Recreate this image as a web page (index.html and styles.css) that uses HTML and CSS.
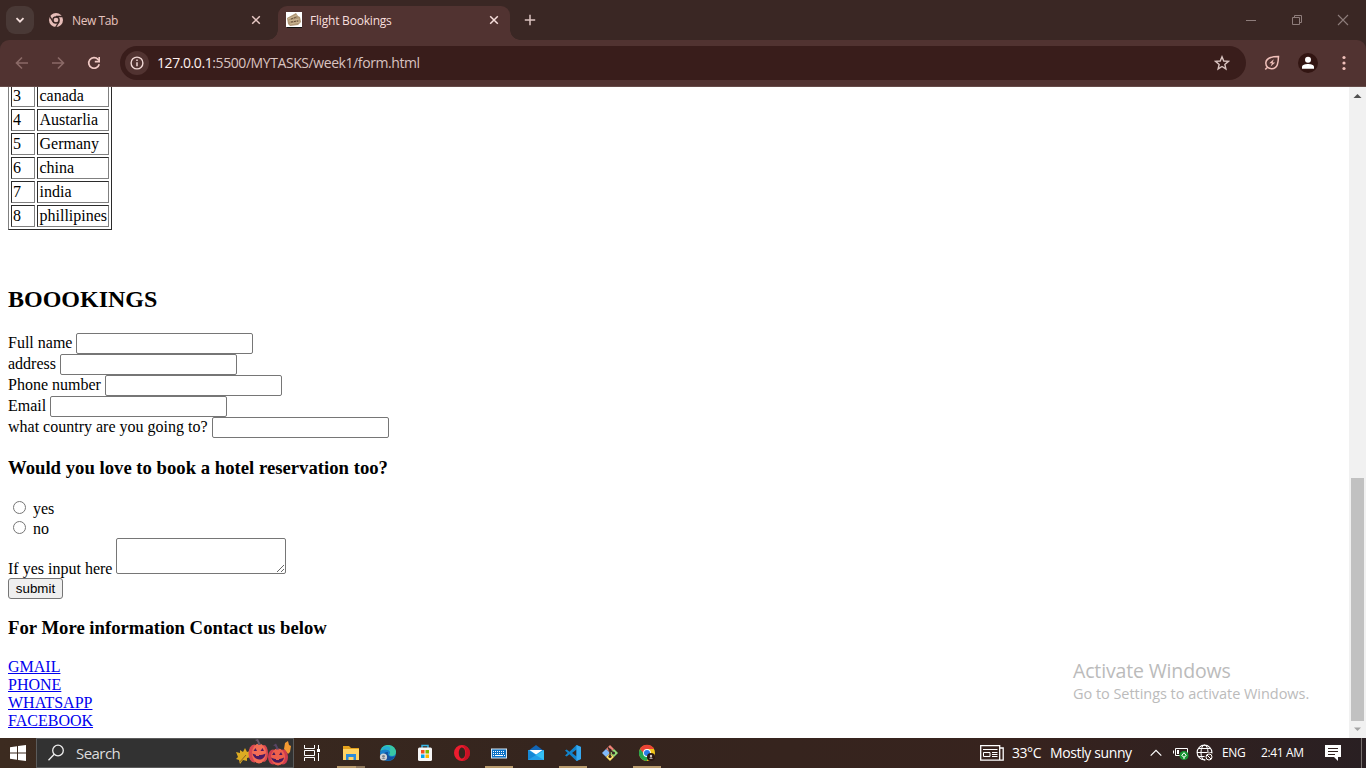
FILE: index.html
```html
<!DOCTYPE html>
<html lang="en">
<head>
<meta charset="utf-8">
<title>Flight Bookings</title>
<link rel="stylesheet" href="styles.css">
</head>
<body>
<div class="screen">
  <header class="tabstrip">
    <div class="tabsearch"><svg width="10" height="10" viewBox="0 0 10 10"><path d="M1.500 3.200 5 6.700 8.500 3.200" fill="none" stroke="#f3dedb" stroke-width="1.800"/></svg></div>
    <div class="tab">
      <svg width="16" height="16" viewBox="0 0 16 16"><circle cx="8" cy="8" r="7" fill="#e7bdb8"/><circle cx="8" cy="8" r="3.100" fill="#e7bdb8" stroke="#3a2724" stroke-width="1.500"/><path d="M8 4.500H15M5 9.700 1.500 3.800M11 9.800 7.500 15.500" stroke="#3a2724" stroke-width="1.300"/></svg>
      <span class="tabname t-new">New Tab</span>
      <svg class="close" width="10" height="10" viewBox="0 0 10 10"><path d="m1.200 1.200 7.600 7.600m0-7.600L1.200 8.800" stroke="#e7c8c4" stroke-width="1.500"/></svg>
    </div>
    <div class="tab active">
      <svg width="16" height="16" viewBox="0 0 16 16"><path fill="#fff" d="M0 0h16v15H0z"/><path fill="#111" d="M1 15h15v1H1z"/><path fill="#b09776" d="m1 6 9-5 2 3 2 1 1 5-3 3-8 1-2-2z"/><path d="m2 7 9-4M3 9l10-2M4 12l10-2" stroke="#d9c6a2" stroke-width=".7"/><path d="m5 7 6-2M5 10l7-1" stroke="#67523c" stroke-dasharray="2 1"/></svg>
      <span class="tabname t-flight">Flight Bookings</span>
      <svg class="close" width="10" height="10" viewBox="0 0 10 10"><path d="m1.200 1.200 7.600 7.600m0-7.600L1.200 8.800" stroke="#f7dfdc" stroke-width="1.500"/></svg>
    </div>
    <svg class="plus" width="12" height="12" viewBox="0 0 12 12"><path d="M6 .8v10.400M.8 6h10.400" stroke="#dbc3c0" stroke-width="1.500"/></svg>
    <div class="winbtns">
      <svg width="12" height="12" viewBox="0 0 12 12"><path d="M1 6.500h10" stroke="#8e7d7b"/></svg>
      <svg width="12" height="12" viewBox="0 0 12 12"><path d="M1.500 3.500h7v7h-7zM3.500 3.500v-2h7v7h-2" fill="none" stroke="#8e7d7b"/></svg>
      <svg width="12" height="12" viewBox="0 0 12 12"><path d="m1 1 10 10M11 1 1 11" stroke="#8e7d7b" stroke-width="1.100"/></svg>
    </div>
  </header>
  <div class="toolbarwrap"><nav class="toolbar">
    <svg class="back" width="14" height="14" viewBox="0 0 14 14"><path d="M13 7H2M7 1.500 1.500 7 7 12.500" fill="none" stroke="#8b6a67" stroke-width="1.600"/></svg>
    <svg class="fwd" width="14" height="14" viewBox="0 0 14 14"><path d="M1 7h11M7 1.500 12.500 7 7 12.500" fill="none" stroke="#8b6a67" stroke-width="1.600"/></svg>
    <svg class="reload" width="14" height="14" viewBox="0 0 14 14"><path d="M12.200 8.200A5.300 5.300 0 1 1 11 3.400l1 1" fill="none" stroke="#f0c9c4" stroke-width="1.700"/><path d="M12.200 1v4.600H7.800" fill="none" stroke="#f0c9c4" stroke-width="1.600"/></svg>
    <div class="omnibox">
      <div class="info"><svg width="14" height="14" viewBox="0 0 14 14"><circle cx="7" cy="7" r="5.900" fill="none" stroke="#f0d8d5" stroke-width="1.400"/><path d="M7 6.300v4M7 3.500V5" stroke="#f0d8d5" stroke-width="1.500"/></svg></div>
      <span class="url"><b>127.0.0.1</b>:5500/MYTASKS/week1/form.html</span>
      <svg class="star" width="16" height="16" viewBox="0 0 16 16"><path d="m8 1.800 1.750 4.200 4.600.4-3.500 3 1.050 4.500L8 11.500l-3.900 2.400 1.050-4.500-3.500-3 4.600-.4z" fill="none" stroke="#d9c3c0" stroke-width="1.400"/></svg>
    </div>
    <svg class="leaf" width="16" height="16" viewBox="0 0 16 16"><path d="M14.500 1.500C9 1.500 2 2 1.800 8c0 4 3 5.800 6 5.700 6-.2 6.500-6.500 6.700-12.200zM3.500 12 1.300 14.500" fill="none" stroke="#f0c0ba" stroke-width="1.500"/><path d="m9.800 4.200-4.500 4h2.600L6.600 11.600l4.600-4.200H8.600z" fill="#f0c0ba"/></svg>
    <div class="avatar"><svg width="14" height="14" viewBox="0 0 14 14"><circle cx="7" cy="3.700" r="3" fill="#fff"/><path d="M1 12.800v-2C1 8.700 4.500 7.900 7 7.900s6 .8 6 2.900v2z" fill="#fff"/></svg></div>
    <svg class="dots" width="4" height="16" viewBox="0 0 4 16" fill="#f0c0ba"><circle cx="2" cy="2.500" r="1.600"/><circle cx="2" cy="8" r="1.600"/><circle cx="2" cy="13.500" r="1.600"/></svg>
  </nav></div>
  <div class="viewport">
    <main class="page">
      <table class="countries">
        <tr><td class="num">3</td><td class="name">canada</td></tr>
        <tr><td class="num">4</td><td class="name">Austarlia</td></tr>
        <tr><td class="num">5</td><td class="name">Germany</td></tr>
        <tr><td class="num">6</td><td class="name">china</td></tr>
        <tr><td class="num">7</td><td class="name">india</td></tr>
        <tr><td class="num">8</td><td class="name">phillipines</td></tr>
      </table>
      <h2 class="title">BOOOKINGS</h2>
      <form>
        <div class="row"><label>Full name</label><input class="field" type="text"></div>
        <div class="row"><label>address</label><input class="field" type="text"></div>
        <div class="row"><label>Phone number</label><input class="field" type="text"></div>
        <div class="row"><label>Email</label><input class="field" type="text"></div>
        <div class="row"><label>what country are you going to?</label><input class="field" type="text"></div>
        <h3 class="hotel">Would you love to book a hotel reservation too?</h3>
        <div class="choice"><input class="radio" type="radio" name="hotel"><label>yes</label></div>
        <div class="choice"><input class="radio" type="radio" name="hotel"><label>no</label></div>
        <div class="arearow"><label>If yes input here</label><textarea class="area"></textarea></div>
        <button class="submit" type="button">submit</button>
      </form>
      <h3 class="contact">For More information Contact us below</h3>
      <div class="links"><a href="#">GMAIL</a><a href="#">PHONE</a><a href="#">WHATSAPP</a><a href="#">FACEBOOK</a></div>
    </main>
    <div class="scrollbar">
      <svg width="17" height="17" viewBox="0 0 17 17"><path d="m4.500 11 4-4 4 4z" fill="#505050"/></svg>
      <div class="thumb"></div>
      <svg width="17" height="17" viewBox="0 0 17 17"><path d="m5 6.500 3.500 3.500L12 6.500z" fill="#a3a3a3"/></svg>
    </div>
    <div class="activate"><div class="act1">Activate Windows</div><div class="act2">Go to Settings to activate Windows.</div></div>
  </div>
  <footer class="taskbar">
    <div class="start"><svg width="16" height="16" viewBox="0 0 16 16"><path fill="#fff" d="M0 2.200 7 1.200v6.300H0zM8 1.100 16 0v7.500H8zM0 8.500h7v6.300l-7-1zM8 8.500h8V16l-8-1.100z"/></svg></div>
    <div class="search">
      <svg width="18" height="18" viewBox="0 0 18 18"><circle cx="11" cy="6.500" r="5.300" fill="none" stroke="#eee" stroke-width="1.300"/><path d="m7.200 10.200-5.700 6" stroke="#eee" stroke-width="1.300"/></svg>
      <span class="searchtext">Search</span>
      <svg class="pumpkins" width="56" height="28" viewBox="0 0 56 28">
        <path d="M0 13l4 1 0-3 3 2 2-4 2 4 3-1-1 4 2 2-4 1 0 3-4-1-3 4-1-4-3-1 2-2z" fill="#dcab22"/><path d="m3 24 7-8" stroke="#87632a"/>
        <path d="m49 4 3-2 1 4 2 1-1 6-2 2-4-5z" fill="#f39a32"/>
        <ellipse cx="18" cy="14.500" rx="5.500" ry="9" fill="#d94851"/><ellipse cx="28" cy="14.500" rx="4" ry="8.500" fill="#d94851"/><ellipse cx="23" cy="14.500" rx="7" ry="10" fill="#f46d55"/><path d="M22 6c0-3-1-4-3-5l3-1 3 6z" fill="#69586a"/><path d="m17.500 12 2-3 1.500 3zm7 0 2-3 1.500 3zM16.500 14.500c4 2 9 2 13 0-1 8-11 8-13 0z" fill="#4d1b62"/><path d="M20 15h3v2h-3z" fill="#f46d55"/>
        <ellipse cx="37" cy="18" rx="5" ry="7.500" fill="#cf3c4f"/><ellipse cx="47" cy="18" rx="5" ry="7.500" fill="#cf3c4f"/><ellipse cx="42" cy="18" rx="7" ry="8.500" fill="#ef604c"/><path d="M40 10.500c0-3-1-4-3-4l3-2 3 6z" fill="#574565"/><path d="m36 16 2-3 1.500 3zm7 0 2-3 1.500 3zM35 18.500c4 2 9 2 13 0-1 7-11 7-13 0z" fill="#471a5c"/><path d="M40 19h3v2h-3z" fill="#ef604c"/>
      </svg>
    </div>
    <div class="app view"><svg width="18" height="18" viewBox="0 0 18 18"><path d="M1.500 1v3.500h10V1M1.500 17v-3.500h10V17M1.500 6.500h10v5h-10zM15.500 1v5M15.500 9v8" fill="none" stroke="#fff"/><path d="M14 5h3v3h-3z" fill="#fff"/></svg></div>
    <div class="app open first"><svg width="18" height="18" viewBox="0 0 18 18"><path d="M1 2h6l2 2h8v11H1z" fill="#e5a21c"/><path d="M1 5h16v11H1z" fill="#ffd464"/><path d="M4 10h10v6h-2.500v-3h-5v3H4z" fill="#2a8bd8"/></svg></div>
    <div class="app"><svg width="18" height="18" viewBox="0 0 18 18"><circle cx="9" cy="9" r="8" fill="#1680cc"/><path d="M1.500 7C3-1 15-1 17 7c.5 5-4 6-7 4 4-5-4-7-8.500-4z" fill="#38c7a4"/><path d="M2 6c4-6 11-4 9 1-2-2-6-3-9-1z" fill="#24acd9"/><path d="M9 8c-1 4 3 6 7 4-3 6-11 6-12 0 0-3 2-4 5-4z" fill="#12519d"/><circle cx="4.500" cy="13" r="3.600" fill="#ced2d6"/><circle cx="4.500" cy="12.300" r="1.400" fill="#7b8289"/><path d="M2.500 15c1-1.500 3-1.500 4 0" fill="#7b8289"/></svg></div>
    <div class="app"><svg width="18" height="18" viewBox="0 0 18 18"><path d="M6 4V1.500h6V4" fill="none" stroke="#37b7e7" stroke-width="1.500"/><rect x="2" y="3.500" width="14" height="13.500" rx="1.500" fill="#f6f6f6"/><path d="M5 6h3.500v3.500H5z" fill="#f25022"/><path d="M9.500 6H13v3.500H9.500z" fill="#7fba00"/><path d="M5 10.500h3.500V14H5z" fill="#00a4ef"/><path d="M9.500 10.500H13V14H9.500z" fill="#ffb900"/></svg></div>
    <div class="app"><svg width="18" height="18" viewBox="0 0 18 18"><path fill-rule="evenodd" d="M9 1a8 8 0 1 0 0 16A8 8 0 0 0 9 1zm0 2.500c2 0 3.200 2.400 3.200 5.500S11 14.500 9 14.500 5.800 12 5.800 9 7 3.500 9 3.500z" fill="#ec1c2e"/><path d="M9 1.500c5 0 8 3 8 7.500s-3 7.500-8 7.500c5-1 5-14 0-15z" fill="#b70d1e" opacity=".65"/></svg></div>
    <div class="app open"><svg width="18" height="18" viewBox="0 0 18 18"><rect x="1" y="4.500" width="16" height="10" fill="#d6e8f5"/><rect x="2" y="5.500" width="14" height="8" fill="#0b71c5"/><path d="M3 7.500h12M3 9.500h12" stroke="#fff" stroke-dasharray="1 1"/><path d="M3 11.500h1M5 11.500h8M14 11.500h1" stroke="#fff"/></svg></div>
    <div class="app"><svg width="18" height="18" viewBox="0 0 18 18"><path d="m1 7 8-6 8 6z" fill="#1265b5"/><path d="M1 6h16v10H1z" fill="#239fe8"/><path d="M2.500 6h13L9 10.500z" fill="#fff"/><path d="M1 6.500 9 11l8-4.500V16z" fill="#34c0f5"/><path d="m1 6 8 5-8 5z" fill="#1688d5"/></svg></div>
    <div class="app open"><svg width="18" height="18" viewBox="0 0 18 18"><path d="m12.500 1 4.500 2v12l-4.500 2L5.500 10.300 2.700 12.500 1 11.500 3.700 9 1 6.500l1.700-1 2.800 2.200zM12.500 5.500 8 9l4.500 3.500z" fill="#1284cc" fill-rule="evenodd"/><path d="m12.500 1 4.500 2v12l-4.500 2z" fill="#36a9f0"/></svg></div>
    <div class="app"><svg width="18" height="18" viewBox="0 0 18 18"><path d="m9 1 4 4-4 4-4-4z" fill="#f08377"/><path d="m5 5 4 4-4 4-4-4z" fill="#80b9fa"/><path d="m13 5 4 4-4 4-4-4z" fill="#92dd77"/><path d="m9 9 4 4-4 4-4-4z" fill="#ffe36c"/><path d="M7 3.500 9 6v7M9 6l3.500 3" fill="none" stroke="#392722" stroke-width="1.300"/><circle cx="9" cy="6" r="1.600" fill="#392722"/><circle cx="12.500" cy="9" r="1.600" fill="#392722"/><circle cx="9" cy="12.500" r="1.600" fill="#392722"/></svg></div>
    <div class="app open"><svg width="18" height="18" viewBox="0 0 18 18"><circle cx="9" cy="9" r="8" fill="#f3c51b"/><path d="M2 5a8 8 0 0 1 14 0H9L6 11z" fill="#ea4335"/><path d="M2 5a8 8 0 0 0 6.500 12l3.500-6-6-1z" fill="#25a650"/><circle cx="9" cy="9" r="3.900" fill="#fff"/><circle cx="9" cy="9" r="3" fill="#287de8"/><circle cx="13" cy="13" r="4" fill="#2b1714"/><circle cx="13" cy="12" r="1.200" fill="#cfc5c3"/><path d="M11.200 14.700c.7-1.500 2.900-1.500 3.600 0z" fill="#cfc5c3"/></svg></div>
    <div class="tray">
      <svg class="news" width="24" height="16" viewBox="0 0 24 16"><path d="M.7.700h19v14.500h-19zM19.700 3h3.500v12.200H19" fill="none" stroke="#fff" stroke-width="1.300"/><path d="M3 4.500h14.500M12 7.500h5.500M12 9.500h5.500M12 11.500h5.500M3.500 7.500H10v4H3.500z" fill="none" stroke="#fff"/></svg>
      <span class="temp">33°C</span><span class="sunny">Mostly sunny</span>
      <svg class="caret" width="12" height="8" viewBox="0 0 12 8"><path d="m.7 6.700 5.300-5.300 5.300 5.300" fill="none" stroke="#fff" stroke-width="1.200"/></svg>
      <svg class="battery" width="16" height="14" viewBox="0 0 16 14"><path d="M2.500 2.500h12v7h-12zM.5 4.500v3" fill="none" stroke="#fff"/><path d="M4 4h2v4H4z" fill="#fff"/><circle cx="11" cy="9.500" r="4.500" fill="#159431"/><path d="M11 6.700 8.700 9.500 11 11.200l2.300-1.700z" fill="none" stroke="#fff"/><path d="M11 11v2" stroke="#fff"/></svg>
      <svg class="globe" width="18" height="18" viewBox="0 0 18 18"><circle cx="8.500" cy="8.500" r="7.400" fill="none" stroke="#fff" stroke-width="1.100"/><ellipse cx="8.500" cy="8.500" rx="3.500" ry="7.400" fill="none" stroke="#fff"/><path d="M1 8.500h15M2.300 4.500h12.400M2.300 12.500h8" stroke="#fff"/><circle cx="13" cy="13" r="4.500" fill="#35241f"/><circle cx="13" cy="13" r="3" fill="none" stroke="#fff"/><path d="m11 11 4 4" stroke="#fff"/></svg>
      <span class="eng">ENG</span><span class="time">2:41 AM</span>
      <svg class="notif" width="16" height="16" viewBox="0 0 16 16"><path d="M0 0h16v12h-3v4l-4-4H0z" fill="#fff"/><path d="M3 3.500h10M3 6.500h10M3 9.500h7" stroke="#30201e"/></svg>
      <i class="edge"></i>
    </div>
  </footer>
</div>
</body>
</html>
```
FILE: styles.css
```css
* { box-sizing: border-box; }
body { margin: 0; font-family: "Liberation Serif", serif; font-size: 16px; line-height: 18px; color: #000; }
svg { display: block; flex: none; }
.screen { width: 1366px; height: 768px; overflow: hidden; display: flex; flex-direction: column; background: #fff; }
.tabstrip { height: 40px; flex: none; display: flex; background: #3a2724; font-family: "Open Sans", sans-serif; font-size: 12px; color: #e7c4bf; }
.tabsearch { width: 28px; height: 28px; margin: 6px 0 0 6px; border-radius: 9px; background: #493936; display: flex; align-items: center; justify-content: center; }
.tab { display: flex; align-items: center; width: 232px; height: 34px; margin-top: 6px; padding: 0 11px 6px 8px; gap: 8px; }
.tab:not(.active) { margin-left: 6px; margin-right: 6px; }
.tab.active { position: relative; background: #513331; border-radius: 9px 9px 0 0; color: #f7dfdc; }
.tab.active::before, .tab.active::after { content: ""; position: absolute; bottom: 0; width: 10px; height: 10px; }
.tab.active::before { left: -10px; background: radial-gradient(circle at 0 0, transparent 9.500px, #513331 10px); }
.tab.active::after { right: -10px; background: radial-gradient(circle at 100% 0, transparent 9.500px, #513331 10px); }
.tabname { white-space: nowrap; padding-top: 2px; }
.t-new { letter-spacing: -.4px; }
.t-flight { letter-spacing: -.2px; }
.close { margin-left: auto; }
.plus { margin: 14px 0 0 14px; }
.winbtns { margin: 14px 17px 0 auto; display: flex; gap: 34px; }
.toolbarwrap { height: 47px; flex: none; background: #3a2724; }
.toolbar { height: 47px; display: flex; align-items: center; background: #513331; border-radius: 9px 9px 0 0; border-bottom: 1px solid #654b48; }
.back { margin-left: 15px; }
.fwd { margin-left: 22px; }
.reload { margin-left: 22px; }
.omnibox { width: 1126px; height: 34px; margin-left: 19px; border-radius: 17px; background: #391d1b; display: flex; align-items: center; padding: 0 16px 0 5px; }
.info { width: 24px; height: 24px; border-radius: 50%; background: #513331; display: flex; align-items: center; justify-content: center; }
.url { margin-left: 8px; padding-bottom: 2px; font: 14px "Open Sans", sans-serif; letter-spacing: -.42px; color: #d9c3c0; white-space: nowrap; }
.url b { font-weight: 400; color: #fff0ee; }
.star { margin-left: auto; }
.leaf { margin-left: 18px; }
.avatar { width: 20px; height: 20px; margin-left: 18px; border-radius: 50%; background: #321512; display: flex; align-items: center; justify-content: center; }
.dots { margin-left: 24px; }
.viewport { position: relative; height: 651px; flex: none; display: flex; overflow: hidden; }
.page { flex: 1; padding-left: 8px; overflow: hidden; }
.countries { margin-top: -5px; width: 104px; table-layout: fixed; border: 1px solid; border-color: #808080 #2b2b2b #2b2b2b #808080; border-spacing: 2px; border-collapse: separate; }
.countries td { height: 22px; padding: 1px; border: 1px solid; border-color: #2b2b2b #808080 #808080 #2b2b2b; white-space: nowrap; }
.num { width: 24px; }
.name { width: 72px; }
.countries .name { padding: 1px 0 1px 1.500px; }
h2, h3 { margin: 0; }
.title { margin-top: 56px; font-size: 24px; line-height: 27px; }
form { margin-top: 20px; }
.row { height: 21px; display: flex; align-items: flex-start; gap: 4px; }
.row label { margin-top: 1px; }
.field { width: 177px; height: 21px; margin: 0; border: 1px solid #767676; border-radius: 2px; background: #fff; }
.hotel { font-size: 18.720px; line-height: 21px; margin: 19px 0 20px; }
.choice { height: 20px; display: flex; align-items: flex-start; }
.choice label { margin-top: 2px; }
.radio { width: 13px; height: 13px; margin: 3px 7px 0 5px; }
.arearow { height: 40px; display: flex; gap: 4px; }
.arearow label { margin-top: 22px; }
.area { width: 170px; height: 36px; margin: 0; border: 1px solid #767676; border-radius: 2px; resize: both; overflow: auto; }
.submit { display: block; width: 55px; height: 21px; padding: 0; border: 1px solid #767676; border-radius: 3px; background: #efefef; color: #000; font: 13.333px "Liberation Sans", sans-serif; }
.contact { font-size: 18.720px; line-height: 21px; margin: 18px 0 20px; }
.links { display: flex; flex-direction: column; align-items: flex-start; }
.links a { color: #0000ee; text-decoration: underline; }
.scrollbar { width: 17px; background: #f1f1f1; display: flex; flex-direction: column; }
.thumb { width: 13px; height: 243px; margin: auto 0 0 2px; background: #c1c1c1; }
.activate { position: absolute; left: 1073px; top: 570px; font-family: "Open Sans", sans-serif; color: #bbb; white-space: nowrap; }
.act1 { font-size: 19.500px; line-height: 27px; letter-spacing: -.15px; }
.act2 { font-size: 14.500px; line-height: 20px; letter-spacing: -.04px; }
.taskbar { height: 30px; flex: none; display: flex; background: linear-gradient(90deg, #3c2b20, #35251e 40%, #37231e 75%, #291f22); font-family: "Open Sans", sans-serif; color: #fff; }
.start { width: 36px; display: flex; align-items: center; justify-content: center; }
.search { width: 258px; height: 30px; background: #323232; border: 1px solid #5b5b5b; display: flex; align-items: center; padding: 0 1px 0 10px; }
.searchtext { margin-left: 11px; font-size: 15px; letter-spacing: -.55px; color: #ddd; }
.pumpkins { margin-left: auto; }
.app { width: 37px; height: 30px; display: flex; align-items: center; justify-content: center; }
.app.view { width: 38px; padding-right: 2px; }
.open { background: linear-gradient(#b99b6d, #b99b6d) 50% 100% / 28px 2px no-repeat; }
.first { background-image: linear-gradient(90deg, #b99b6d 19px, #8d765a 19px); }
.tray { margin-left: auto; width: 386px; display: flex; align-items: center; font-size: 14px; white-space: nowrap; }
.temp { width: 30px; margin-left: 8px; letter-spacing: -.45px; }
.sunny { width: 83px; margin-left: 8px; letter-spacing: -.38px; }
.caret { margin-left: 17px; }
.battery { margin-left: 11px; }
.globe { margin-left: 7px; }
.eng { width: 24px; margin-left: 8px; font-size: 12px; letter-spacing: -.4px; }
.time { width: 45px; margin-left: 15px; font-size: 12px; letter-spacing: -.35px; }
.notif { margin-left: 19px; }
.edge { width: 1px; height: 30px; margin-left: 20px; background: #77706e; }
```
